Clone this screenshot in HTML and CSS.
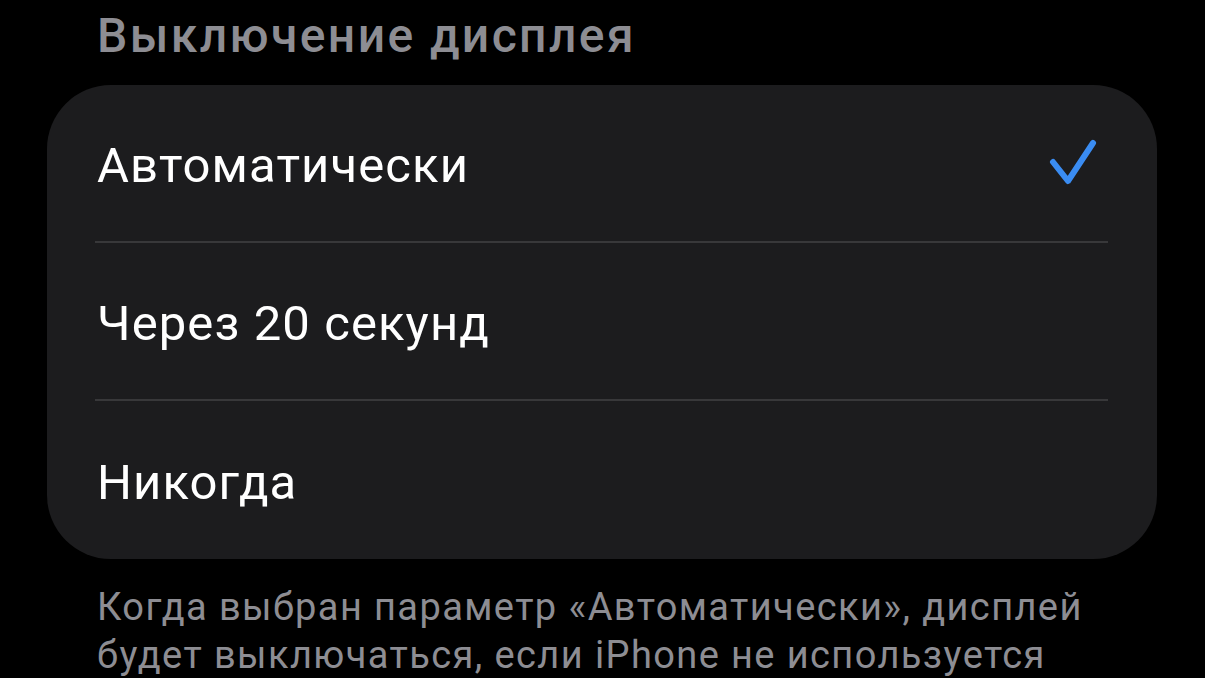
FILE: index.html
```html
<!DOCTYPE html>
<html lang="ru">
<head>
    <meta charset="UTF-8">
    <meta name="viewport" content="width=device-width, initial-scale=1.0">
    <title>Выключение дисплея</title>
    <link rel="stylesheet" href="styles.css">
</head>
<body>

<div class="screen">
    <!-- Section title -->
    <h2 class="section-title">Выключение дисплея</h2>

    <!-- Options list -->
    <div class="options-card">
        <div class="option">
            <span class="option-label">Автоматически</span>
            <svg class="check" width="50" height="50" viewBox="0 0 50 50">
                <polyline points="5,24 20,43 45,5" fill="none" stroke="#3a8cf2" stroke-width="6" stroke-linecap="round" stroke-linejoin="round"/>
            </svg>
        </div>
        <div class="option">
            <span class="option-label">Через 20 секунд</span>
        </div>
        <div class="option">
            <span class="option-label">Никогда</span>
        </div>
    </div>

    <!-- Footnote -->
    <p class="section-note">Когда выбран параметр «Автоматически», дисплей будет выключаться, если iPhone не используется</p>
</div>

</body>
</html>
```

FILE: styles.css
```css
body {
    margin: 0;
    padding: 0;
    background-color: #000;
    font-family: Roboto, "Liberation Sans", sans-serif;
    overflow: hidden;
}

.screen {
    width: 1110px;
    padding-left: 47px;
}

.section-title {
    margin: 0;
    padding: 8px 0 0 50px;
    font-size: 48px;
    font-weight: 500;
    line-height: 56px;
    letter-spacing: 2.4px;
    color: #8d8d93;
}

.options-card {
    margin-top: 21px;
    background-color: #1c1c1e;
    border-radius: 64px;
}

.option {
    display: flex;
    justify-content: space-between;
    align-items: center;
    height: 158px;
    box-sizing: border-box;
    padding-top: 4px;
    margin: 0 49px 0 48px;
    border-bottom: 2px solid #38383a;
}

.option:last-child {
    border-bottom: none;
}

.option-label {
    padding-left: 2px;
    font-size: 49px;
    letter-spacing: 1.1px;
    color: #fff;
}

.check {
    margin-right: 10px;
    margin-top: -4px;
}

.section-note {
    margin: 24px 0 0 50px;
    width: 1060px;
    font-size: 38px;
    line-height: 48px;
    letter-spacing: 1.4px;
    color: #8d8d93;
}
```
